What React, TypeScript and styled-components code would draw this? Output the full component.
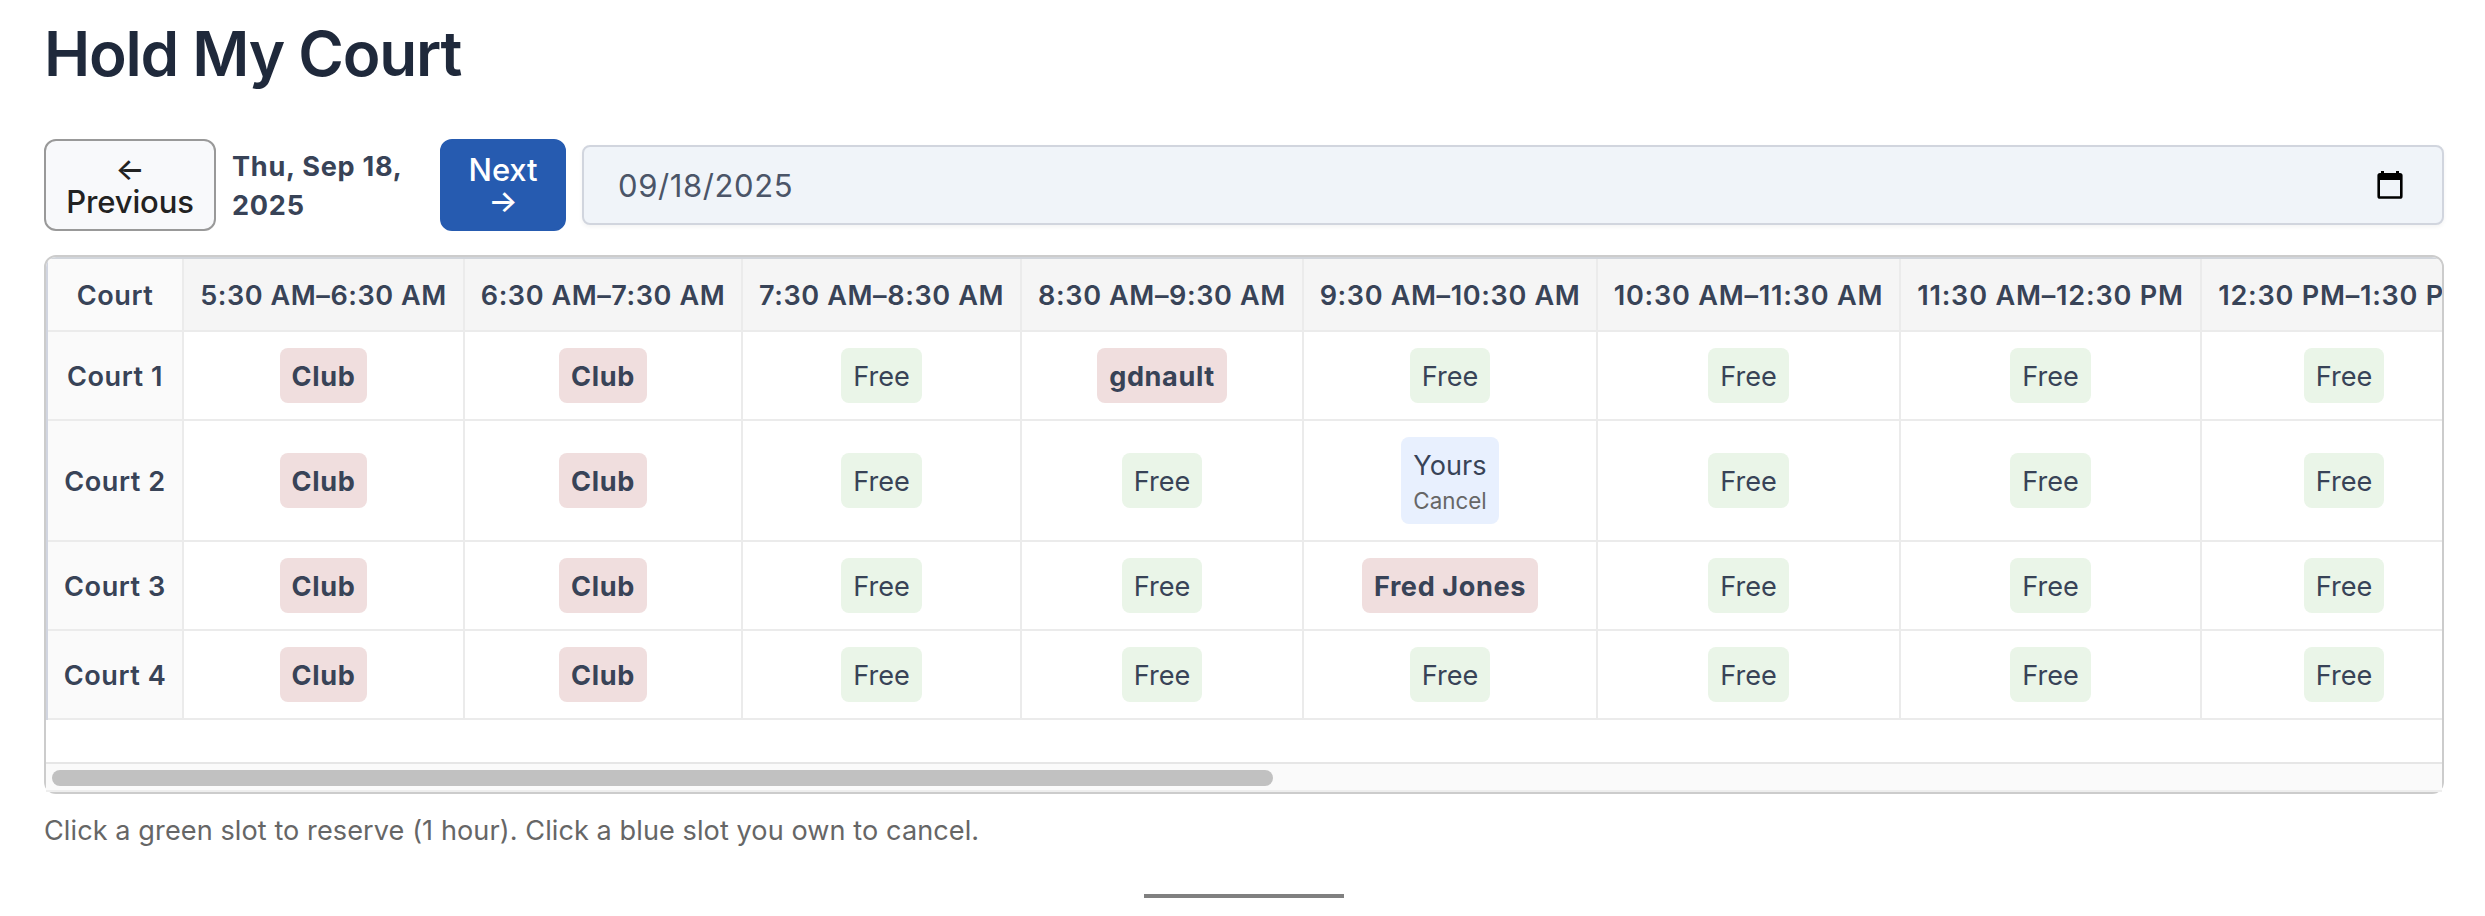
import React from "react";
import styled, { createGlobalStyle } from "styled-components";

const GlobalStyle = createGlobalStyle`
  *, *::before, *::after { box-sizing: border-box; }
  body {
    margin: 0;
    background: #fff;
    color: #384357;
    font-family: Inter, "Liberation Sans", sans-serif;
    font-size: 27.1px;
    line-height: 39px;
    overflow: hidden;
  }
`;

const Page = styled.main`
  height: 916px;
  padding: 0 41px 0 44px;
  display: flex;
  flex-direction: column;
  overflow: hidden;
`;

const Title = styled.h1`
  margin: 16px 0 47px;
  color: #1f293b;
  font-size: 62px;
  line-height: 76px;
  font-weight: 600;
  letter-spacing: -1.25px;
`;

const Toolbar = styled.div`
  display: flex;
  align-items: center;
  height: 92px;
  flex: none;
  margin-bottom: 24px;
`;

const DayButton = styled.button<{ $primary?: boolean; $width: number }>`
  width: ${(p) => p.$width}px;
  height: 92px;
  padding: 2px 0 0;
  border: 2px solid ${(p) => (p.$primary ? "#265bb0" : "#999")};
  border-radius: 12px;
  background: ${(p) => (p.$primary ? "#265bb0" : "#f8f9fb")};
  color: ${(p) => (p.$primary ? "#fff" : "#222")};
  font: 500 31px/32px Inter, "Liberation Sans", sans-serif;
  letter-spacing: -0.15px;
  text-align: center;
  flex: none;
`;

const ButtonLine = styled.span`
  display: block;
`;

const ArrowLine = styled(ButtonLine)`
  line-height: 30px;
  padding-bottom: 2px;
`;

const DateLabel = styled.strong`
  width: 191px;
  margin: 0 17px 0 16px;
  padding-top: 2px;
  flex: none;
  font-weight: 700;
  letter-spacing: 0.75px;
`;

const DateField = styled.div`
  flex: 1;
  height: 80px;
  margin-left: 16px;
  padding: 0 39px 0 34px;
  display: flex;
  align-items: center;
  justify-content: space-between;
  border: 2px solid #d1d5de;
  border-radius: 8px;
  background: #f0f4f9;
  box-shadow: 0 2px 4px rgba(0, 0, 0, 0.05);
  color: #4b5568;
  font-size: 31px;
  letter-spacing: 0.6px;
`;

const Board = styled.section`
  flex: none;
  height: 539px;
  border: 2px solid #ccc;
  border-radius: 12px;
  display: flex;
  flex-direction: column;
  justify-content: space-between;
`;

const Viewport = styled.div`
  overflow: hidden;
  border-radius: 10px 10px 0 0;
`;

const Schedule = styled.table`
  table-layout: fixed;
  width: 2442px;
  border-collapse: separate;
  border-spacing: 0;
  border-top: 2px solid #d1d5db;
  border-left: 2px solid #d1d5e0;
`;

const Cell = styled.td`
  padding: 0;
  text-align: center;
  vertical-align: middle;
  border-right: 2px solid #ebebeb;
  border-bottom: 2px solid #ebebeb;
`;

const HeadCell = styled(Cell).attrs({ as: "th" })<{ $corner?: boolean; $tracking?: number }>`
  height: 73px;
  padding-top: 2px;
  background: ${(p) => (p.$corner ? "#fafafa" : "#f5f5f5")};
  font-weight: 600;
  letter-spacing: ${(p) => p.$tracking ?? 0.55}px;
  white-space: nowrap;
`;

const CourtCell = styled(Cell).attrs({ as: "th" })`
  padding-top: 2px;
  background: #fafafa;
  font-weight: 600;
  letter-spacing: 0.55px;
  white-space: nowrap;
`;

const Row = styled.tr<{ $tall?: boolean }>`
  height: ${(p) => (p.$tall ? 121 : 89)}px;
`;

type Kind = "free" | "taken" | "mine";
const pillColors: Record<Kind, string> = {
  free: "#eaf5e8",
  taken: "#f0dede",
  mine: "#e8f0fe",
};

const Pill = styled.span<{ $kind: Kind }>`
  display: inline-block;
  vertical-align: middle;
  padding: 9px 12px 7px;
  border-radius: 8px;
  background: ${(p) => pillColors[p.$kind]};
  font-weight: ${(p) => (p.$kind === "taken" ? 700 : 400)};
  letter-spacing: ${(p) => (p.$kind === "taken" ? 0.62 : 0.05)}px;
`;

const CancelNote = styled.small`
  display: block;
  color: #666;
  font-size: 22.4px;
  line-height: 32px;
  letter-spacing: 0;
`;

const ScrollTrack = styled.div`
  height: 30px;
  padding: 6px;
  border-top: 2px solid #e6e6e6;
  border-bottom: 2px solid #eee;
  background: #fafafa;
`;

const ScrollThumb = styled.div`
  width: 1221px;
  height: 16px;
  border-radius: 8px;
  background: #c1c1c1;
`;

const Hint = styled.p`
  margin: 17px 0 0;
  color: #666;
  letter-spacing: 0.08px;
`;

const Grip = styled.div`
  width: 200px;
  height: 4px;
  flex: none;
  margin: 44px auto 0 1100px;
  background: #808080;
`;

const CalendarIcon = () => (
  <svg width="26" height="28" viewBox="0 0 26 28">
    <path d="M4 0h3v3H4zM19 0h3v3h-3z" />
    <path
      fillRule="evenodd"
      d="M3 2h20a2.6 2.6 0 0 1 2.6 2.6v20.6A2.6 2.6 0 0 1 23 27.8H3A2.6 2.6 0 0 1 .4 25.2V4.600A2.600 2.600 0 0 1 3 2zM3 9v16.200h20V9z"
    />
  </svg>
);

// Label, column width, letter spacing of the label.
const columns: [string, number, number][] = [
  ["5:30 AM–6:30 AM", 281, 0.55],
  ["6:30 AM–7:30 AM", 278, 0.55],
  ["7:30 AM–8:30 AM", 279, 0.6],
  ["8:30 AM–9:30 AM", 282, 0.6],
  ["9:30 AM–10:30 AM", 294, 0.62],
  ["10:30 AM–11:30 AM", 303, 0.78],
  ["11:30 AM–12:30 PM", 301, 0.8],
  ["12:30 PM–1:30 PM", 286, 0.75],
];

const courts = [
  { name: "Court 1", slots: ["Club", "Club", "", "gdnault", "", "", "", ""] },
  { name: "Court 2", slots: ["Club", "Club", "", "", "Yours", "", "", ""] },
  { name: "Court 3", slots: ["Club", "Club", "", "", "Fred Jones", "", "", ""] },
  { name: "Court 4", slots: ["Club", "Club", "", "", "", "", "", ""] },
];

const Slot = ({ holder }: { holder: string }) => {
  if (!holder) return <Pill $kind="free">Free</Pill>;
  if (holder === "Yours")
    return (
      <Pill $kind="mine">
        Yours
        <CancelNote>Cancel</CancelNote>
      </Pill>
    );
  return <Pill $kind="taken">{holder}</Pill>;
};

export default function App() {
  return (
    <>
      <GlobalStyle />
      <Page>
        <Title>Hold My Court</Title>
        <Toolbar>
          <DayButton $width={172}>
            <ArrowLine>←</ArrowLine>
            <ButtonLine>Previous</ButtonLine>
          </DayButton>
          <DateLabel>
            Thu, Sep 18,
            <br />
            2025
          </DateLabel>
          <DayButton $primary $width={126}>
            <ButtonLine>Next</ButtonLine>
            <ArrowLine>→</ArrowLine>
          </DayButton>
          <DateField>
            09/18/2025
            <CalendarIcon />
          </DateField>
        </Toolbar>
        <Board>
          <Viewport>
            <Schedule>
              <colgroup>
                <col width={136} />
                {columns.map(([label, width]) => (
                  <col key={label} width={width} />
                ))}
              </colgroup>
              <thead>
                <tr>
                  <HeadCell $corner>Court</HeadCell>
                  {columns.map(([label, , tracking]) => (
                    <HeadCell key={label} $tracking={tracking}>
                      {label}
                    </HeadCell>
                  ))}
                </tr>
              </thead>
              <tbody>
                {courts.map((court) => (
                  <Row key={court.name} $tall={court.slots.includes("Yours")}>
                    <CourtCell>{court.name}</CourtCell>
                    {court.slots.map((holder, i) => (
                      <Cell key={i}>
                        <Slot holder={holder} />
                      </Cell>
                    ))}
                  </Row>
                ))}
              </tbody>
            </Schedule>
          </Viewport>
          <ScrollTrack>
            <ScrollThumb />
          </ScrollTrack>
        </Board>
        <Hint>Click a green slot to reserve (1 hour). Click a blue slot you own to cancel.</Hint>
        <Grip />
      </Page>
    </>
  );
}
